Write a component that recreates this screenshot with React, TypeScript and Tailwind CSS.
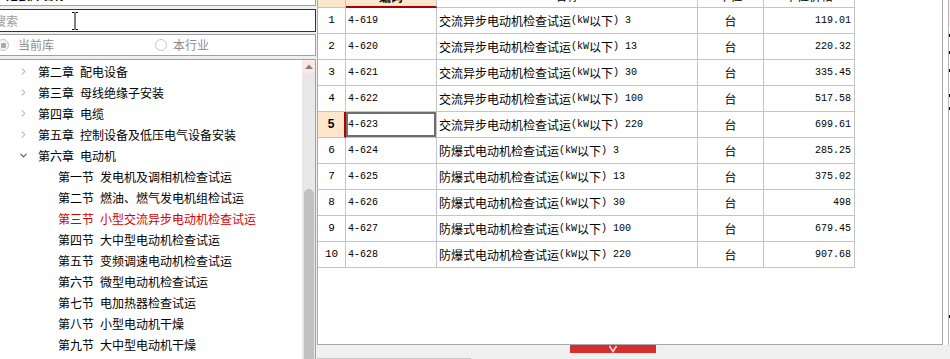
import React from "react";
import { ChevronRight, ChevronDown } from "lucide-react";

const CJK = /([\u2E80-\u9FFF\uFF00-\uFFEF]+)/;

function Mixed({ t }: { t: string }) {
  const parts = t.split(CJK).filter((p) => p !== "");
  return (
    <>
      {parts.map((p, i) =>
        /[\u2E80-\u9FFF\uFF00-\uFFEF]/.test(p) ? (
          <span key={i} className="font-['Noto_Sans_CJK_SC',sans-serif] text-[12px]">
            {p}
          </span>
        ) : (
          <span key={i} className="font-['Liberation_Mono',monospace] text-[10px] whitespace-pre">
            {p}
          </span>
        )
      )}
    </>
  );
}

const chapters = [
  "第二章|配电设备",
  "第三章|母线绝缘子安装",
  "第四章|电缆",
  "第五章|控制设备及低压电气设备安装",
];

const sections = [
  "第一节|发电机及调相机检查试运",
  "第二节|燃油、燃气发电机组检试运",
  "第三节|小型交流异步电动机检查试运",
  "第四节|大中型电动机检查试运",
  "第五节|变频调速电动机检查试运",
  "第六节|微型电动机检查试运",
  "第七节|电加热器检查试运",
  "第八节|小型电动机干燥",
  "第九节|大中型电动机干燥",
];

const rows: [string, string, string][] = [
  ["4-619", "交流异步电动机检查试运(kW以下) 3", "119.01"],
  ["4-620", "交流异步电动机检查试运(kW以下) 13", "220.32"],
  ["4-621", "交流异步电动机检查试运(kW以下) 30", "335.45"],
  ["4-622", "交流异步电动机检查试运(kW以下) 100", "517.58"],
  ["4-623", "交流异步电动机检查试运(kW以下) 220", "699.61"],
  ["4-624", "防爆式电动机检查试运(kW以下) 3", "285.25"],
  ["4-625", "防爆式电动机检查试运(kW以下) 13", "375.02"],
  ["4-626", "防爆式电动机检查试运(kW以下) 30", "498"],
  ["4-627", "防爆式电动机检查试运(kW以下) 100", "679.45"],
  ["4-628", "防爆式电动机检查试运(kW以下) 220", "907.68"],
];

function TreeLabel({ s, red }: { s: string; red?: boolean }) {
  const [a, b] = s.split("|");
  return (
    <span className={`flex gap-[6px] text-[12px] leading-none font-['Noto_Sans_CJK_SC',sans-serif] ${red ? "text-[#d40000]" : "text-black"}`}>
      <span>{a}</span>
      <span>{b}</span>
    </span>
  );
}

export default function App() {
  return (
    <div className="w-[950px] h-[359px] overflow-hidden flex bg-[#f0f0f0] font-['Noto_Sans_CJK_SC',sans-serif]">
      {/* Left panel */}
      <div className="w-[316px] h-full flex flex-col shrink-0">
        <div className="h-[6px] bg-white border-b border-r border-[#a0a0a0] overflow-hidden">
          <div className="-mt-[12px] pl-[6px] text-[12px] leading-[14px] font-bold text-black">定额库名称</div>
        </div>
        <div className="mt-[3px] h-[23px] bg-white border border-l-0 border-[#a80000] flex items-center relative">
          <span className="-ml-[6px] text-[12px] text-[#9a9a9a] leading-none">搜索</span>
          <svg className="absolute left-[71px] top-[2px]" width="8" height="18" viewBox="0 0 8 18">
            <path d="M1 0.5H3.5M4.5 0.5H7M4 1V17M1 17.5H3.5M4.5 17.5H7" stroke="#000" strokeWidth="1" fill="none" />
          </svg>
        </div>
        <div className="mt-[2px] h-[22px] bg-white border border-l-0 border-[#a0a0a0] flex items-center text-[12px] text-[#8c8c8c] leading-none">
          <span className="-ml-[3px] w-[12px] h-[12px] rounded-full border border-[#c4c4c4] bg-[#f4f4f4] flex items-center justify-center">
            <span className="w-[5px] h-[5px] bg-[#a8a8a8] rounded-[1px]" />
          </span>
          <span className="ml-[9px]">当前库</span>
          <span className="ml-[101px] w-[12px] h-[12px] rounded-full border border-[#c8c8c8] bg-white" />
          <span className="ml-[6px]">本行业</span>
        </div>
        <div className="mt-[3px] flex-1 bg-white border-t border-r border-[#a0a0a0] flex overflow-hidden">
          <div className="flex-1 flex flex-col pt-[1px]">
            {chapters.map((c) => (
              <div key={c} className="h-[21px] flex items-center">
                <ChevronRight size={11} strokeWidth={2.2} className="ml-[18px] text-[#a8a8a8]" />
                <span className="ml-[9px]">
                  <TreeLabel s={c} />
                </span>
              </div>
            ))}
            <div className="h-[21px] flex items-center">
              <ChevronDown size={11} strokeWidth={2.2} className="ml-[18px] text-[#505050]" />
              <span className="ml-[9px]">
                <TreeLabel s="第六章|电动机" />
              </span>
            </div>
            {sections.map((s, i) => (
              <div key={s} className="h-[21px] flex items-center pl-[58px]">
                <TreeLabel s={s} red={i === 2} />
              </div>
            ))}
          </div>
          <div className="w-[13px] h-full bg-[#e8e8e8] flex flex-col items-center">
            <div className="w-full h-[13px] bg-[#fde6e6] flex items-center justify-center">
              <svg width="8" height="5" viewBox="0 0 8 5">
                <path d="M0 5L4 0.5L8 5Z" fill="#808080" />
              </svg>
            </div>
            <div className="mt-[116px] w-[10px] flex-1 bg-[#c1c1c1] rounded-t-[5px]" />
          </div>
        </div>
      </div>

      {/* Right panel */}
      <div className="flex-1 flex flex-col ml-[1px]">
        <div className="h-[345px] bg-white border border-t-0 border-[#a8a8a8] overflow-hidden">
          {/* header */}
          <div className="flex h-[8px]">
            <div className="w-[28px] h-full bg-[#fde7cc] border-r border-b border-[#c4c4c4]" />
            <div className="w-[91px] h-full bg-[#fde7cc] border-r border-[#c4c4c4] border-b-2 border-b-[#a80000] overflow-hidden flex justify-center">
              <span className="-mt-[10px] text-[12px] leading-[14px] font-bold text-black">编码</span>
            </div>
            <div className="w-[261px] h-full border-r border-b border-[#c4c4c4] overflow-hidden flex justify-center">
              <span className="-mt-[11px] text-[12px] leading-[14px] text-black">名称</span>
            </div>
            <div className="w-[66px] h-full border-r border-b border-[#c4c4c4] overflow-hidden flex justify-center">
              <span className="-mt-[11px] text-[12px] leading-[14px] text-black">单位</span>
            </div>
            <div className="w-[91px] h-full border-r border-b border-[#c4c4c4] overflow-hidden flex justify-center">
              <span className="-mt-[11px] text-[12px] leading-[14px] text-black">单位价格</span>
            </div>
          </div>
          {rows.map((r, i) => {
            const sel = i === 4;
            return (
              <div key={r[0]} className="flex h-[26px]">
                <div
                  className={`w-[28px] h-full border-b flex items-center justify-center font-['Liberation_Mono',monospace] text-black ${
                    sel
                      ? "bg-[#fde7cc] border-r-2 border-r-[#b00000] border-b-[#c4c4c4] font-bold text-[12px]"
                      : "bg-white border-r border-[#c4c4c4] text-[11px]"
                  }`}
                >
                  {i + 1}
                </div>
                <div
                  className={`w-[91px] h-full border-r border-b border-[#c4c4c4] flex items-center pl-[2px] font-['Liberation_Mono',monospace] text-[10px] text-black ${
                    sel ? "shadow-[inset_0_0_0_2px_#6e6e6e]" : ""
                  }`}
                >
                  {r[0]}
                </div>
                <div className="w-[261px] h-full border-r border-b border-[#c4c4c4] flex items-center pl-[2px] text-black leading-none whitespace-nowrap overflow-hidden">
                  <Mixed t={r[1]} />
                </div>
                <div className="w-[66px] h-full border-r border-b border-[#c4c4c4] flex items-center justify-center text-[12px] text-black">
                  台
                </div>
                <div className="w-[91px] h-full border-r border-b border-[#c4c4c4] flex items-center justify-end pr-[3px] font-['Liberation_Mono',monospace] text-[10px] text-black">
                  {r[2]}
                </div>
              </div>
            );
          })}
        </div>
        <div className="relative flex-1">
          <div className="absolute left-[253px] top-0 w-[86px] h-[8px] bg-[#d32f2f] flex items-center justify-center">
            <svg width="10" height="8" viewBox="0 0 10 8">
              <path d="M1.5 1L5 6.5L8.5 1" stroke="#ffd6d6" strokeWidth="1.6" fill="none" />
            </svg>
          </div>
          <div className="absolute left-0 bottom-0 w-[154px] h-[1px] bg-[#c8c8c8]" />
        </div>
      </div>

      {/* Right edge strip */}
      <div className="w-[7px] h-full flex flex-col shrink-0">
        <div className="flex-1 flex">
          <div className="w-[5px] bg-white" />
          <div className="w-[2px] border-l border-[#b8b8b8] bg-white flex flex-col">
            <div className="h-[26px] bg-[#fde7e7]" />
            <div className="h-[8px]" />
            <div className="h-[3px] bg-black" />
            <div className="h-[14px]" />
            <div className="h-[3px] bg-black" />
            <div className="h-[15px]" />
            <div className="h-[3px] bg-black" />
            <div className="h-[22px]" />
            <div className="h-[3px] bg-black" />
            <div className="h-[10px]" />
            <div className="h-[3px] bg-black" />
            <div className="h-[205px]" />
            <div className="h-[3px] bg-black" />
          </div>
        </div>
        <div className="h-[14px] bg-[#f0f0f0]" />
      </div>
    </div>
  );
}
